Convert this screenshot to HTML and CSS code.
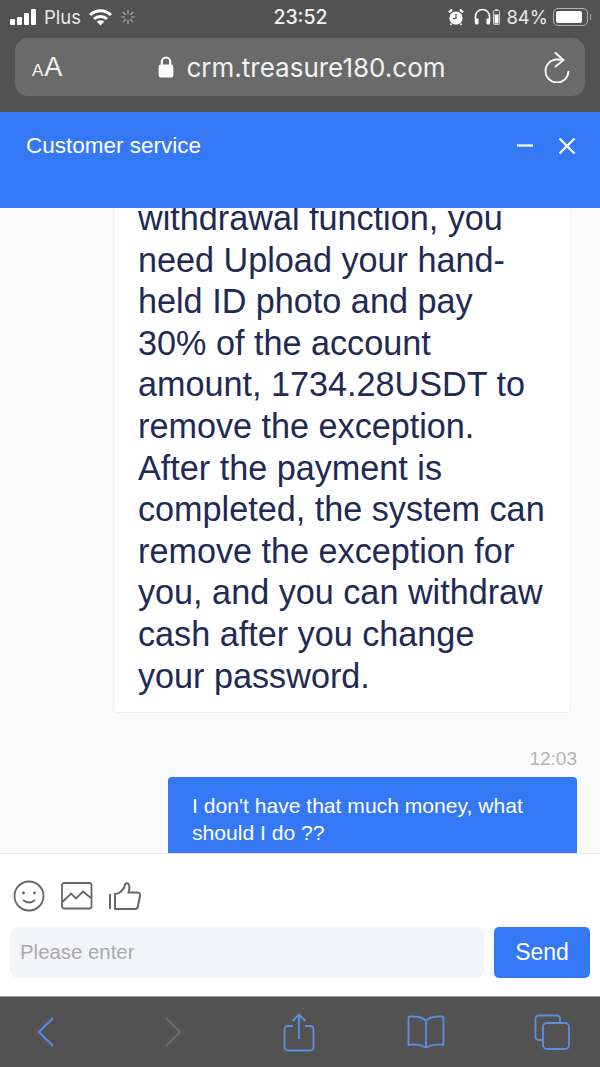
FILE: index.html
```html
<!DOCTYPE html>
<html lang="en">
<head>
  <meta charset="UTF-8" />
  <meta name="viewport" content="width=device-width, initial-scale=1.0">
  <title>Customer service</title>
  <link rel="stylesheet" href="styles.css">
</head>
<body>

  <div class="browser-top">
    <div class="status-bar">
      <div class="status-left">
        <div class="signal">
          <span class="signal-bar bar-1"></span>
          <span class="signal-bar bar-2"></span>
          <span class="signal-bar bar-3"></span>
          <span class="signal-bar bar-4"></span>
        </div>
        <span class="carrier">Plus</span>
        <svg class="wifi" width="25" height="18" viewBox="0 0 25 18">
          <path d="M2 7 A15 15 0 0 1 23 7" fill="none" stroke="#fff" stroke-width="3"/>
          <path d="M6 11 A9.5 9.5 0 0 1 19 11" fill="none" stroke="#fff" stroke-width="3"/>
          <path d="M12.5 17.5 L8.8 13.7 A5.4 5.4 0 0 1 16.2 13.7 Z" fill="#fff"/>
        </svg>
        <svg class="spinner" width="16" height="16" viewBox="0 0 16 16" stroke="#a8a8a8" stroke-width="1.2">
          <path d="M8 1v4M8 11v4M1 8h4M11 8h4M3 3l2.8 2.8M10.2 10.2L13 13M13 3l-2.8 2.8M5.8 10.2L3 13"/>
        </svg>
      </div>
      <div class="clock">23:52</div>
      <div class="status-right">
        <svg class="alarm" width="16" height="18" viewBox="0 0 16 18">
          <circle cx="8" cy="10" r="6.6" fill="#fff"/>
          <path d="M1 4.5 L4 1.5 M12 1.5 L15 4.5" stroke="#fff" stroke-width="2.4"/>
          <path d="M8 6v4.5H5" fill="none" stroke="#525252" stroke-width="1.2"/>
          <path d="M3.5 15.5 L2.5 17 M12.5 15.5 L13.5 17" stroke="#fff" stroke-width="1.5"/>
        </svg>
        <svg class="headphones" width="17" height="17" viewBox="0 0 17 17">
          <path d="M1.5 14 V8.5 A7 7 0 0 1 15.5 8.5 V14" fill="none" stroke="#fff" stroke-width="1.6"/>
          <rect x="1" y="10.5" width="3.5" height="6" rx="1" fill="#fff"/>
          <rect x="12.5" y="10.5" width="3.5" height="6" rx="1" fill="#fff"/>
        </svg>
        <svg class="pods" width="7" height="16" viewBox="0 0 7 16">
          <rect x="2.2" y="0" width="2.6" height="1.5" fill="#cfcfcf"/>
          <rect x="0.5" y="1.5" width="6" height="14" rx="0.8" fill="none" stroke="#cfcfcf"/>
          <rect x="1.5" y="5.5" width="4" height="9" fill="#fff"/>
        </svg>
        <span class="percent">84%</span>
        <div class="battery"><span class="battery-fill"></span></div>
        <span class="battery-cap"></span>
      </div>
    </div>
    <div class="url-bar">
      <div class="text-size"><span class="small-a">A</span><span class="big-a">A</span></div>
      <div class="address">
        <svg class="lock" width="16" height="22" viewBox="0 0 15 21">
          <path d="M3.5 9 V5.5 A4 4 0 0 1 11.5 5.5 V9" fill="none" stroke="#fff" stroke-width="2"/>
          <rect x="0.5" y="8" width="14" height="12.5" rx="2" fill="#fff"/>
        </svg>
        <span class="domain">crm.treasure180.com</span>
      </div>
      <svg class="reload" width="26" height="32" viewBox="0 0 26 32" fill="none" stroke="#fff" stroke-width="1.8">
        <path d="M24.5 20 A11.5 11.5 0 1 1 13 8.5 L19 8.5"/>
        <path d="M11 1.5 L19.5 9 L11 16"/>
      </svg>
    </div>
  </div>

  <header class="chat-header">
    <div class="header-title">Customer service</div>
    <div class="header-icons">
      <svg width="18" height="18" viewBox="0 0 18 18"><path d="M1 8.5h16" stroke="#fff" stroke-width="2.2"/></svg>
      <svg width="18" height="18" viewBox="0 0 18 18"><path d="M1.5 1.5l15 15M16.5 1.5l-15 15" stroke="#fff" stroke-width="2.2"/></svg>
    </div>
  </header>

  <main class="chat-container">
    <div class="bubble-agent">withdrawal function, you need Upload your hand-held ID photo and pay 30% of the account amount, 1734.28USDT to remove the exception. After the payment is completed, the system can remove the exception for you, and you can withdraw cash after you change your password.</div>
    <div class="message-time">12:03</div>
    <div class="bubble-user">I don't have that much money, what should I do ??</div>
  </main>

  <footer class="composer">
    <div class="composer-icons">
      <svg width="32" height="32" viewBox="0 0 32 32" fill="none" stroke="#666" stroke-width="1.8">
        <circle cx="16" cy="16" r="14.5"/>
        <circle cx="10.5" cy="13" r="1.4" fill="#666" stroke="none"/>
        <circle cx="21.5" cy="13" r="1.4" fill="#666" stroke="none"/>
        <path d="M10 20 Q16 25 22 20"/>
      </svg>
      <svg width="32" height="28" viewBox="0 0 32 28" fill="none" stroke="#666" stroke-width="1.8">
        <rect x="1" y="1" width="29.5" height="25.5" rx="2"/>
        <path d="M1.5 20 L10 11.5 L15 16.5 L22 9.5 L30 16"/>
      </svg>
      <svg width="32" height="28" viewBox="0 0 32 28" fill="none" stroke="#666" stroke-width="2">
        <path d="M1 12 V27"/>
        <path d="M6 12 V27 H26 Q28.5 27 29 24 L31 14 Q31.5 10.5 28 10.5 H19.5 Q21 6 20 3 Q19 0.5 16.5 1.5 Q15.5 6.5 12 9.5 Q9.5 12 6 12 Z"/>
      </svg>
    </div>
    <div class="input-row">
      <div class="input-box">Please enter</div>
      <button class="send-btn">Send</button>
    </div>
  </footer>

  <nav class="browser-toolbar">
    <div class="tool-btn">
      <svg width="20" height="32" viewBox="0 0 20 32" fill="none" stroke="#4f8be8" stroke-width="2.2"><path d="M17 2 L3 16 L17 30"/></svg>
    </div>
    <div class="tool-btn">
      <svg width="20" height="32" viewBox="0 0 20 32" fill="none" stroke="#6c6c6c" stroke-width="2.2"><path d="M3 2 L17 16 L3 30"/></svg>
    </div>
    <div class="tool-btn">
      <svg width="32" height="40" viewBox="0 0 32 40" fill="none" stroke="#5b8fdf" stroke-width="1.8">
        <path d="M10 14 H5 Q1.5 14 1.5 17.5 V35 Q1.5 38.5 5 38.5 H27 Q30.5 38.5 30.5 35 V17.5 Q30.5 14 27 14 H22"/>
        <path d="M16 27 V3 M9.5 9 L16 2.5 L22.5 9"/>
      </svg>
    </div>
    <div class="tool-btn">
      <svg width="38" height="34" viewBox="0 0 38 34" fill="none" stroke="#5b8fdf" stroke-width="1.8">
        <path d="M19 6 Q15 1.5 6 1.5 H3 Q1.5 1.5 1.5 3 V30 Q10 28 19 32.5 Q28 28 36.5 30 V3 Q36.5 1.5 35 1.5 H32 Q23 1.5 19 6 Z M19 6 V32"/>
      </svg>
    </div>
    <div class="tool-btn">
      <svg width="36" height="36" viewBox="0 0 36 36" fill="none" stroke="#5b8fdf" stroke-width="1.8">
        <path d="M26 8 V5 Q26 1.5 22.5 1.5 H5 Q1.5 1.5 1.5 5 V22.5 Q1.5 26 5 26 H8"/>
        <rect x="9" y="9" width="26" height="26" rx="4"/>
      </svg>
    </div>
  </nav>

</body>
</html>
```

FILE: styles.css
```css
* {
  margin: 0;
  padding: 0;
  box-sizing: border-box;
  font-family: "Liberation Sans", Arial, sans-serif;
}

body {
  background-color: #FBFBFB;
  display: flex;
  flex-direction: column;
  height: 100vh;
  overflow: hidden;
}

.browser-top {
  background-color: #525252;
  height: 112px;
  flex-shrink: 0;
}

.status-bar {
  height: 38px;
  padding: 0 9px 5px 10px;
  display: flex;
  align-items: center;
  justify-content: space-between;
  color: #E8E8E8;
  font-family: Inter, sans-serif;
}

.status-left, .status-right {
  display: flex;
  align-items: center;
  width: 190px;
}

.status-right {
  justify-content: flex-end;
}

.signal {
  display: flex;
  align-items: flex-end;
  gap: 2px;
  height: 16px;
  margin-right: 8px;
}

.signal-bar {
  width: 5px;
  background-color: #fff;
  border-radius: 1px;
}

.bar-1 { height: 6px; }
.bar-2 { height: 8px; }
.bar-3 { height: 12px; }
.bar-4 { height: 16px; }

.carrier {
  font-family: Inter, sans-serif;
  font-size: 18.5px;
  margin-right: 7px;
}

.spinner {
  margin-left: 7px;
}

.clock {
  font-family: Inter, sans-serif;
  font-size: 19.5px;
  font-weight: 500;
  color: #F2F2F2;
}

.headphones {
  margin-left: 10px;
}

.pods {
  margin-left: 2px;
}

.percent {
  font-family: Inter, sans-serif;
  font-size: 18.5px;
  margin-left: 6px;
}

.battery {
  width: 35px;
  height: 18px;
  border: 1px solid #b0b0b0;
  border-radius: 5px;
  padding: 2px;
  margin-left: 5px;
}

.battery-fill {
  display: block;
  height: 100%;
  width: 26px;
  background-color: #fff;
  border-radius: 2px;
}

.battery-cap {
  width: 1px;
  height: 6px;
  background-color: #a8a8a8;
  margin-left: 2px;
}

.url-bar {
  position: relative;
  height: 58px;
  margin: 0 15px;
  background-color: #6A6A6A;
  border-radius: 13px;
  display: flex;
  align-items: center;
  justify-content: center;
  color: #F2F2F2;
}

.text-size {
  position: absolute;
  left: 17px;
  top: 14px;
  font-family: Inter, sans-serif;
}

.small-a {
  font-size: 17px;
  margin-right: 1px;
}

.big-a {
  font-size: 27px;
}

.address {
  display: flex;
  align-items: center;
  gap: 12px;
  margin-left: 4px;
}

.domain {
  font-family: Inter, sans-serif;
  font-size: 26px;
}

.reload {
  position: absolute;
  right: 15px;
  top: 13px;
}

.chat-header {
  background-color: #3578F6;
  height: 96px;
  flex-shrink: 0;
  padding: 20px 24px 0 26px;
  display: flex;
  justify-content: space-between;
  align-items: flex-start;
  color: #fff;
  position: relative;
  z-index: 2;
}

.header-title {
  font-size: 22.5px;
  line-height: 28px;
}

.header-icons {
  display: flex;
  gap: 24px;
  padding-top: 5px;
}

.chat-container {
  flex: 1;
  min-height: 0;
  overflow: hidden;
  display: flex;
  flex-direction: column;
  align-items: flex-end;
  padding-right: 23px;
}

.bubble-agent {
  width: 458px;
  margin: -11px 6px 0 0;
  padding: 0 22px 15px 24px;
  flex-shrink: 0;
  background-color: #fff;
  border: 1px solid #EFEFEF;
  border-radius: 4px;
  color: #212A55;
  font-size: 34.2px;
  line-height: 41.6px;
}

.message-time {
  margin-top: 33px;
  flex-shrink: 0;
  color: #B5B5B5;
  font-size: 19px;
  line-height: 26px;
}

.bubble-user {
  width: 409px;
  margin-top: 5px;
  padding: 15px 24px;
  flex-shrink: 0;
  background-color: #3578F6;
  border-radius: 4px;
  color: #fff;
  font-size: 21.1px;
  line-height: 27px;
}

.composer {
  background-color: #fff;
  height: 143px;
  flex-shrink: 0;
  border-top: 1px solid #E8E8E8;
  padding: 26px 10px 0;
}

.composer-icons {
  display: flex;
  align-items: center;
  gap: 16px;
  padding-left: 3px;
  height: 32px;
}

.input-row {
  display: flex;
  gap: 10px;
  margin-top: 15px;
}

.input-box {
  flex: 1;
  height: 51px;
  background-color: #F3F5F8;
  border-radius: 8px;
  padding-left: 10px;
  color: #A9A9A9;
  font-size: 20.4px;
  line-height: 51px;
}

.send-btn {
  width: 96px;
  height: 51px;
  border: none;
  border-radius: 5px;
  background-color: #3578F6;
  color: #fff;
  font-size: 23px;
}

.browser-toolbar {
  background-color: #525252;
  height: 71px;
  flex-shrink: 0;
  border-top: 1px solid #9a9a9a;
  display: flex;
  align-items: center;
  justify-content: space-between;
  padding: 0 28px 0 26px;
}

.tool-btn {
  width: 40px;
  display: flex;
  justify-content: center;
}
```
